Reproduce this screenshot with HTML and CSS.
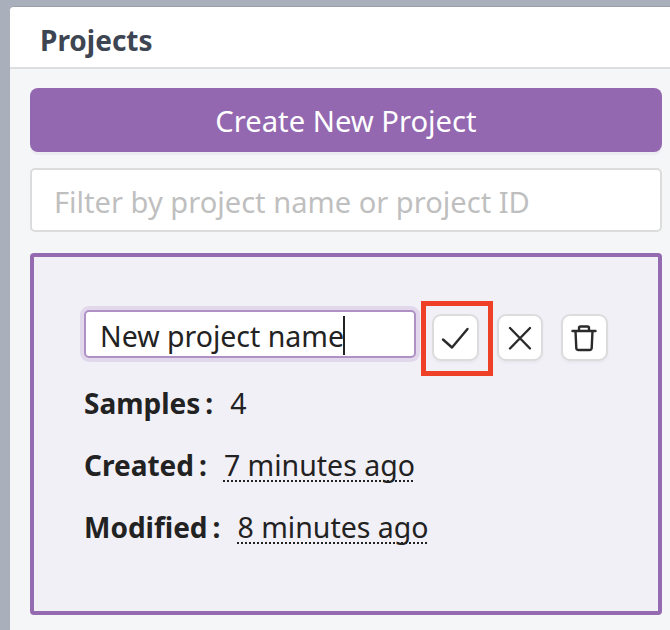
FILE: index.html
```html
<!DOCTYPE html>
<html lang="en">
<head>
<meta charset="utf-8">
<title>Projects</title>
<link rel="stylesheet" href="styles.css">
</head>
<body>
<main class="panel">
  <header class="panel-head"><h1 class="panel-title">Projects</h1></header>
  <div class="panel-body">
    <button class="create-btn" type="button">Create New Project</button>
    <div class="filter">Filter by project name or project ID</div>
    <section class="card">
      <div class="edit-row">
        <div class="name-input"><span>New project name</span><i class="caret"></i></div>
        <button class="icon-btn icon-btn-check" type="button" aria-label="Save">
          <svg viewBox="0 0 30 30" width="30" height="30"><path d="M3 16.5 L12 24.5 L27.5 6" class="stroke"/></svg>
          <span class="highlight"></span>
        </button>
        <button class="icon-btn" type="button" aria-label="Cancel">
          <svg viewBox="0 0 30 30" width="30" height="30"><path d="M5 5 L25 25.5 M25 5 L5 25.5" class="stroke"/></svg>
        </button>
        <button class="icon-btn" type="button" aria-label="Delete">
          <svg viewBox="0 0 30 30" width="30" height="30"><path d="M3.5 8 H26.5 M10 8 V5 Q10 3.5 11.5 3.5 H18.5 Q20 3.5 20 5 V8 M6.5 8 L7.3 25 Q7.4 27 9.5 27 H20.5 Q22.6 27 22.7 25 L23.5 8" class="stroke"/></svg>
        </button>
      </div>
      <p class="meta"><strong class="meta-label">Samples<span class="colon">:</span></strong><span>4</span></p>
      <p class="meta"><strong class="meta-label">Created<span class="colon">:</span></strong><span class="dotted">7 minutes ago</span></p>
      <p class="meta"><strong class="meta-label">Modified<span class="colon">:</span></strong><span class="dotted">8 minutes ago</span></p>
    </section>
  </div>
</main>
</body>
</html>
```
FILE: styles.css
```css
* { box-sizing: border-box; }
html, body { margin: 0; height: 630px; overflow: hidden; }
body {
  background: #a9b0bc;
  font-family: "Noto Sans", "Open Sans", sans-serif;
  color: #222;
  padding: 6px 0 0 9px;
}
.panel {
  height: 624px;
  background: #f5f6f8;
  border-top: 1px solid #9a9faa;
  border-left: 1px solid #a9b0bc;
  border-top-left-radius: 5px;
  overflow: hidden;
}
.panel-head {
  height: 62px;
  background: #fff;
  border-bottom: 2px solid #dcdee1;
  padding: 5px 0 0 30px;
  display: flex;
  align-items: center;
}
.panel-title {
  margin: 0;
  font-size: 28px;
  font-weight: 700;
  color: #3d4553;
}
.panel-body {
  padding: 19px 8px 0 20px;
  display: flex;
  flex-direction: column;
}
.create-btn {
  height: 64px;
  border: 0;
  border-radius: 8px;
  background: #9368b0;
  color: #fff;
  font: 400 29.2px "Noto Sans", sans-serif;
  box-shadow: 0 3px 0 #ecedf0;
  padding: 2px 0 0;
}
.filter {
  margin-top: 16px;
  height: 64px;
  background: #fff;
  border: 2px solid #dcdcdc;
  border-radius: 5px;
  padding: 3px 0 0 22px;
  display: flex;
  align-items: center;
  font-size: 29.1px;
  color: #bfbfbf;
}
.card {
  margin-top: 21px;
  height: 362px;
  background: #f2f0f7;
  border: 4px solid #946ab0;
  border-radius: 4px;
  padding: 53px 0 0 50px;
}
.edit-row {
  display: flex;
  align-items: flex-start;
  gap: 18px;
}
.name-input {
  width: 332px;
  height: 48px;
  margin-right: -2px;
  border: 2px solid #b091c6;
  border-radius: 5px;
  box-shadow: 0 0 0 4px #e2d8ec;
  background: #fff;
  padding: 3px 0 0 14px;
  display: flex;
  align-items: center;
  font-size: 28.5px;
  color: #222;
}
.caret { width: 2px; height: 39px; margin: 0 0 0 -1px; background: #222; }
.icon-btn {
  position: relative;
  width: 46.5px;
  height: 47px;
  margin-top: 4px;
  padding: 0;
  background: #fff;
  border: 2px solid #dcdcdc;
  border-radius: 9px;
  box-shadow: 0 2px 3px #e8e6ee;
  display: flex;
  align-items: center;
  justify-content: center;
}
.stroke { fill: none; stroke: #2a2a2a; stroke-width: 2.4; stroke-linecap: round; stroke-linejoin: round; }
.highlight {
  position: absolute;
  left: -13px;
  top: -15px;
  width: 72px;
  height: 75px;
  border: 5px solid #ee3f27;
}
.meta {
  margin: 0;
  height: 62px;
  display: flex;
  align-items: center;
  gap: 17px;
  font-size: 28.5px;
}
.edit-row + .meta { margin-top: 11px; }
.meta-label { font-weight: 700; font-size: 28px; }
.colon { margin-left: 5px; }
.dotted {
  text-decoration: underline dotted 2px #222;
  text-underline-offset: 4px;
  text-decoration-skip-ink: none;
}
```
